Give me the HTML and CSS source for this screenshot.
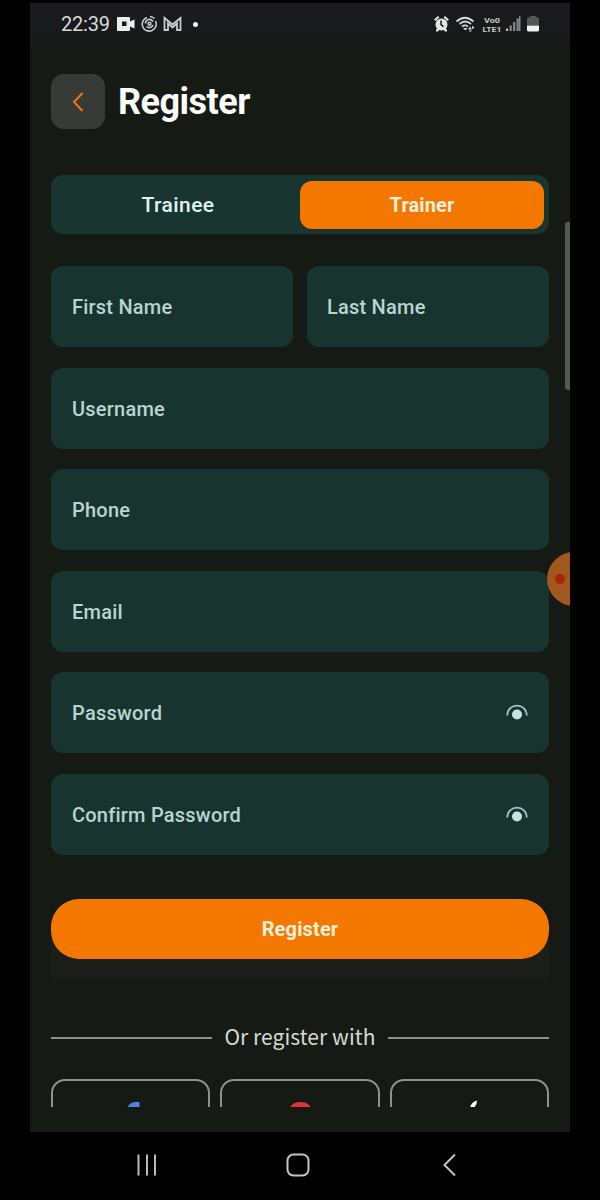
FILE: index.html
```
<!DOCTYPE html>
<html lang="en">
<head>
<meta charset="utf-8">
<title>Register</title>
<link rel="stylesheet" href="styles.css">
</head>
<body>
<div class="phone">
  <div class="screen">
    <div class="status">
      <span class="time">22:39</span>
      <svg class="status-left" width="84" height="20" viewBox="0 0 84 20">
        <path d="M2 3h11q1 0 1 1v3.500l4.500-2v9l-4.500-2v3.500q0 1-1 1H2q-1 0-1-1V4q0-1 1-1z" fill="#eceeee"/>
        <rect x="6" y="7.500" width="4.500" height="4.500" fill="#18191a"/>
        <g fill="none" stroke="#c9cbca" stroke-width="1.600">
          <path d="M31 3.500A7 7 0 1 0 39.500 7M34 2.500a7 7 0 0 1 4.500 2"/>
          <path d="M29.500 9.500a4 4 0 0 1 7.500-2M37 11a4 4 0 0 1-6.500 1.500"/>
          <circle cx="33.500" cy="9.700" r="1.400"/>
        </g>
        <path d="M48.500 16V4l8 6.500 8-6.500v12h-3.500V9.500l-4.500 4-4.500-4V16z" fill="none" stroke="#c9cbca" stroke-width="1.800"/>
        <circle cx="79.500" cy="10.500" r="2.500" fill="#f4f4f4"/>
      </svg>
      <svg class="status-right" width="108" height="20" viewBox="0 0 108 20">
        <g fill="#e4e6e5">
          <circle cx="8.500" cy="10.500" r="6"/>
          <path d="M1 5.500l4-3.500 1.500 1.500-4 3.500zM16 5.500L12 2l-1.500 1.500 4 3.500zM3 16l2-3 2 2-2 2.500H3zM14 16l-2-3-2 2 2 2.500h2z"/>
        </g>
        <path d="M8 6.500v4.200l2.500 2" fill="none" stroke="#18191a" stroke-width="1.500"/>
        <g fill="none" stroke="#d5d8d7" stroke-width="1.700">
          <path d="M23.500 7.500q8.500-7.500 17 0M26.500 10q5.500-5 11.500 0M29 12.700q3-2.500 6 0"/>
        </g>
        <path d="M30 14h4.500l-2.200 2.500zM35 15.500l2-3 2 3zM35.500 16.500l1.800 1.500 1.700-1.500zM39 11.500l2.500 2.500-2.500 1z" fill="#d5d8d7"/>
        <g class="volte">
          <text x="51" y="8.500" textLength="16" lengthAdjust="spacingAndGlyphs">Vo0</text>
          <text x="49.500" y="17.800" textLength="19" lengthAdjust="spacingAndGlyphs">LTE1</text>
        </g>
        <g fill="#828584">
          <rect x="73" y="14.500" width="2" height="2.500" fill="#c4c6c5"/>
          <rect x="76.500" y="11.500" width="2.300" height="5.500"/>
          <rect x="80" y="8" width="2.300" height="9"/>
          <rect x="83.500" y="4.500" width="2.300" height="12.500"/>
          <rect x="86" y="2" width="1.500" height="15"/>
        </g>
        <path d="M94 11V5q0-2 3-2V2h6v1q3 0 3 2v6z" fill="#555756"/>
        <path d="M94 11.500h12V16q0 1.500-1.500 1.500h-9Q94 17.500 94 16z" fill="#f2f2f2"/>
      </svg>
    </div>

    <main class="content">
      <header class="heading">
        <button class="back" aria-label="Back">
          <svg width="14" height="22" viewBox="0 0 14 22"><path d="M11.500 2L3 11l8.500 9" fill="none" stroke="#e8761a" stroke-width="2"/></svg>
        </button>
        <h1 class="title">Register</h1>
      </header>

      <div class="tabs">
        <div class="tab">Trainee</div>
        <div class="tab tab-active">Trainer</div>
      </div>

      <form class="fields">
        <div class="row">
          <div class="field"><span>First Name</span></div>
          <div class="field field-last"><span>Last Name</span></div>
        </div>
        <div class="field"><span>Username</span></div>
        <div class="field"><span>Phone</span></div>
        <div class="field"><span>Email</span></div>
        <div class="field"><span>Password</span>
          <svg class="eye" width="24" height="20" viewBox="0 0 24 20"><path d="M2.200 12.500C2.500 -.7 21.500 -.7 21.800 12.500" fill="none" stroke="#a5c8c6" stroke-width="1.700"/><circle cx="12" cy="11.500" r="5" fill="#c7e2e0"/></svg>
        </div>
        <div class="field"><span>Confirm Password</span>
          <svg class="eye" width="24" height="20" viewBox="0 0 24 20"><path d="M2.200 12.500C2.500 -.7 21.500 -.7 21.800 12.500" fill="none" stroke="#a5c8c6" stroke-width="1.700"/><circle cx="12" cy="11.500" r="5" fill="#c7e2e0"/></svg>
        </div>
      </form>

      <div class="submit-wrap"><button class="submit">Register</button></div>

      <div class="divider"><span class="line"></span><span class="divider-text">Or register with</span><span class="line"></span></div>

      <div class="socials">
        <div class="social"><svg width="30" height="30" viewBox="0 0 30 30"><path d="M23.500 1v7H20q-2 0-2 3v3h5l-1 5h-4v11h-6V19H8v-5h4l-.5-8q3-5 8-5z" fill="#527fe8"/></svg></div>
        <div class="social"><svg width="30" height="30" viewBox="0 0 30 30"><path d="M5 6.500q3-5.500 10.500-5.500T26 6.500L21 11a7 7 0 0 0-11 0z" fill="#dd353a"/></svg></div>
        <div class="social"><svg width="30" height="32" viewBox="0 0 30 32"><path d="M23 -.5q0 7-7 9 0-7 7-9z" fill="#fff"/></svg></div>
      </div>
    </main>
    <div class="scrollbar"></div>
    <div class="bubble"><span class="bubble-dot"></span></div>
  </div>

  <nav class="navbar">
    <svg width="24" height="26" viewBox="0 0 24 26"><path d="M3.500 2.500v21M12 2.500v21M20 2.500v21" stroke="#b9b9b9" stroke-width="2"/></svg>
    <svg class="home" width="26" height="26" viewBox="0 0 26 26"><rect x="2.500" y="2.500" width="21" height="21" rx="6" fill="none" stroke="#c4c4c4" stroke-width="2"/></svg>
    <svg width="18" height="26" viewBox="0 0 18 26"><path d="M14 2.500L3.500 13 14 23.500" fill="none" stroke="#c4c4c4" stroke-width="2"/></svg>
  </nav>
</div>
</body>
</html>
```
FILE: styles.css
```
* { box-sizing: border-box; }
body { margin: 0; background: #000; font-family: Roboto, "Liberation Sans", sans-serif; }
button { border: 0; padding: 0; font-family: inherit; }
svg { display: block; flex: none; overflow: visible; }
.phone { width: 600px; height: 1200px; padding: 3px 30px 0; overflow: hidden; background: #000; }
.screen { position: relative; height: 1129px; overflow: hidden; background: #161a14; }

.status { height: 48px; padding: 11px 29px 0 31px; display: flex; background: linear-gradient(#1a1b1c, #18191a 70%, #161a14); }
.time { width: 55px; font-size: 20px; line-height: 21px; letter-spacing: -.2px; color: #d9dbda; }
.status-right { margin-left: auto; }
.volte { font: 700 8px Roboto, sans-serif; fill: #c9cccb; }

.content { height: 1056px; padding: 23px 21px 0; overflow: hidden; }
.heading { height: 55px; display: flex; align-items: center; gap: 13px; }
.back { width: 54px; height: 55px; border-radius: 13px; background: #383a37; display: flex; align-items: center; justify-content: center; }
.title { margin: 0; font-size: 36px; line-height: 44px; font-weight: 700; color: #fbfdfb; letter-spacing: -.5px; }

.tabs { margin-top: 46px; height: 59px; padding: 6px 5px 5px; border-radius: 12px; background: #183530; display: flex; }
.tab { flex: 1; display: flex; align-items: center; justify-content: center; font-size: 21px; font-weight: 500; letter-spacing: .45px; color: #e0f3ef; }
.tab-active { border-radius: 12px; background: #f47700; color: #fff1d9; font-weight: 700; font-size: 20px; letter-spacing: .1px; }

.fields { margin-top: 32px; display: flex; flex-direction: column; gap: 20.5px; }
.row { display: grid; grid-template-columns: 1fr 1fr; gap: 14px; }
.field { height: 81px; padding: 1px 20px 0 21px; border-radius: 12px; background: #18342f; display: flex; align-items: center; justify-content: space-between; font-size: 20px; font-weight: 500; letter-spacing: .22px; color: #b9d5d0; }
.field-last { padding-left: 20px; }

.submit-wrap { margin-top: 44px; height: 79px; background: linear-gradient(#161a14 50%, #1d1f1c 50%, #1a1d19); }
.submit { width: 498px; height: 60px; border-radius: 28px; background: #f47700; color: #fff0d8; font-size: 20px; font-weight: 700; letter-spacing: .15px; display: block; }

.divider { margin-top: 44px; height: 32px; display: flex; align-items: center; gap: 12.5px; }
.line { flex: 1; height: 2px; background: #8d928b; }
.divider-text { padding-bottom: 3px; font: 400 21px/29px "Noto Sans CJK SC", sans-serif; letter-spacing: .06px; color: #d6dad4; white-space: nowrap; }

.socials { margin-top: 25px; display: grid; grid-template-columns: repeat(3, 1fr); gap: 10px; }
.social { height: 60px; border: 2px solid #8d928b; border-radius: 14px; display: flex; justify-content: center; padding-top: 20px; }

.scrollbar { position: absolute; top: 219px; right: 0; width: 5px; height: 168px; border-radius: 3px 0 0 3px; background: #565856; }
.bubble { position: absolute; left: 517px; top: 549px; width: 54px; height: 54px; border-radius: 50%; background: #a1571d; }
.bubble-dot { position: absolute; left: 8px; top: 22px; width: 10px; height: 10px; border-radius: 50%; background: #aa2308; }

.navbar { height: 66px; padding: 0 111px 0 105px; display: flex; align-items: center; justify-content: space-between; }
.home { margin-right: 4px; }
```
